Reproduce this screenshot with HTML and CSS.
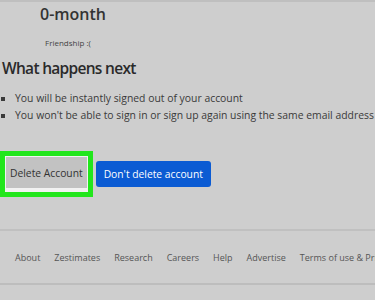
FILE: index.html
```html
<!DOCTYPE html>
<html lang="en">

<head>
    <meta charset="UTF-8">
    <meta name="viewport" content="width=device-width, initial-scale=1.0">
    <title>Close account</title>
    <link rel="stylesheet" href="styles.css">
</head>

<body>
    <div class="pagina">
        <!-- Plano atual -->
        <div class="plano">
            <h2 class="plano-titulo">0-month</h2>
            <p class="plano-nome">Friendship :(</p>
        </div>

        <!-- O que acontece -->
        <h3 class="proximo">What happens next</h3>
        <ul class="lista">
            <li>You will be instantly signed out of your account</li>
            <li>You won't be able to sign in or sign up again using the same email address</li>
        </ul>

        <!-- Botões -->
        <div class="acoes">
            <div class="destaque">
                <button class="botao-apagar">Delete Account</button>
            </div>
            <button class="botao-manter">Don't delete account</button>
        </div>
    </div>

    <!-- Rodapé -->
    <footer class="rodape">
        <a href="#">About</a>
        <a href="#">Zestimates</a>
        <a href="#">Research</a>
        <a href="#">Careers</a>
        <a href="#">Help</a>
        <a href="#">Advertise</a>
        <a href="#">Terms of use &amp; Privacy</a>
    </footer>
</body>

</html>
```

FILE: styles.css
```css
/* Configuração geral */
body {
    margin: 0;
    padding: 0;
    font-family: 'Open Sans', sans-serif;
    background: #cecece;
    color: #333;
    overflow: hidden;
    border-top: 2px solid #bfbfbf;
}

.pagina {
    padding: 0 0 0 2px;
    border-bottom: 2px solid #c0c0c0;
}

.plano {
    padding-left: 38px;
}

.plano-titulo {
    margin: 0;
    padding-top: 1px;
    font-size: 16px;
    font-weight: 600;
    line-height: 22px;
    color: #333;
}

.plano-nome {
    margin: 12px 0 0 5px;
    font-size: 8px;
    line-height: 12px;
    color: #444;
}

.proximo {
    margin: 7px 0 0;
    font-size: 15.5px;
    font-weight: 600;
    letter-spacing: -0.7px;
    line-height: 24px;
    color: #2a2a2a;
}

.lista {
    margin: 10px 0 0;
    padding-left: 13px;
    list-style: square;
    font-size: 10.4px;
    line-height: 17px;
    color: #3a3a3a;
    white-space: nowrap;
}

/* Botões */
.acoes {
    display: flex;
    align-items: center;
    gap: 3px;
    margin: 27px 0 32px -2px;
}

.destaque {
    border: 5px solid #22e61c;
    padding: 1px 1px 4px;
    background: #f2f2f2;
}

.botao-apagar {
    display: block;
    font-family: inherit;
    font-size: 10.3px;
    line-height: 14px;
    color: #333;
    background: #c2c2c2;
    border: none;
    padding: 9px 4px 8px;
}

.botao-manter {
    font-family: inherit;
    font-size: 10.3px;
    line-height: 14px;
    color: #fff;
    background: #0b5bd3;
    border: none;
    border-radius: 3px;
    padding: 6px 8px;
}

/* Rodapé */
.rodape {
    display: flex;
    padding: 20px 0 19px 15px;
    border-bottom: 2px solid #bdbdbd;
    white-space: nowrap;
}

.rodape a {
    font-size: 9px;
    color: #555;
    text-decoration: none;
    margin-right: 14px;
}
```
